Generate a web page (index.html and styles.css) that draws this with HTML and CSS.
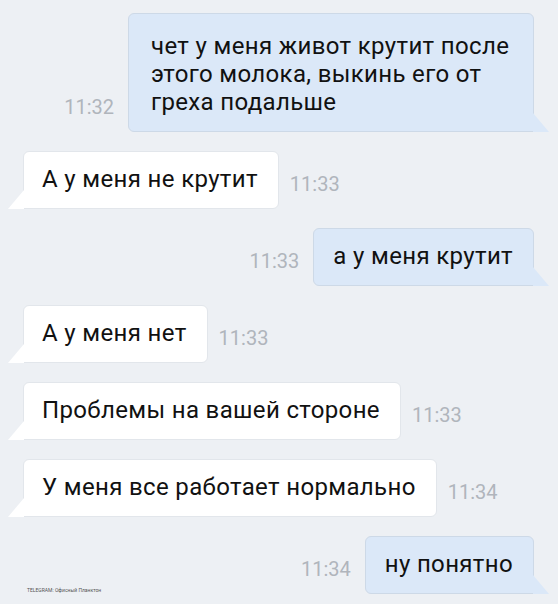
FILE: index.html
```html
<!DOCTYPE html>
<html lang="ru">
<head>
    <meta charset="UTF-8">
    <meta name="viewport" content="width=device-width, initial-scale=1.0">
    <title>Чат</title>
    <link rel="stylesheet" href="styles.css">
</head>
<body>

<div class="chat">
    <div class="row out">
        <span class="time">11:32</span>
        <div class="bubble wide">чет у меня живот крутит после этого молока, выкинь его от греха подальше</div>
    </div>
    <div class="row in">
        <div class="bubble">А у меня не крутит</div>
        <span class="time">11:33</span>
    </div>
    <div class="row out">
        <span class="time">11:33</span>
        <div class="bubble">а у меня крутит</div>
    </div>
    <div class="row in">
        <div class="bubble">А у меня нет</div>
        <span class="time">11:33</span>
    </div>
    <div class="row in">
        <div class="bubble">Проблемы на вашей стороне</div>
        <span class="time">11:33</span>
    </div>
    <div class="row in">
        <div class="bubble">У меня все работает нормально</div>
        <span class="time">11:34</span>
    </div>
    <div class="row out">
        <span class="time">11:34</span>
        <div class="bubble">ну понятно</div>
    </div>
    <div class="watermark">TELEGRAM: Офисный Планктон</div>
</div>

</body>
</html>
```

FILE: styles.css
```css
body {
    margin: 0;
    background-color: #edf0f4;
    font-family: Roboto, "Liberation Sans", sans-serif;
}
.chat {
    position: relative;
    width: 558px;
    height: 604px;
    box-sizing: border-box;
    padding: 13px 24px 0 23px;
    display: flex;
    flex-direction: column;
    gap: 19px;
}
.row {
    display: flex;
    align-items: flex-end;
}
.row.out {
    justify-content: flex-end;
}
.bubble {
    position: relative;
    box-sizing: border-box;
    height: 58px;
    padding: 13px 20px 0 18px;
    font-size: 24px;
    letter-spacing: 0.35px;
    line-height: 28px;
    color: #111;
    border-radius: 6px;
    white-space: nowrap;
}
.in .bubble {
    background-color: #ffffff;
    border: 1px solid #e2e6eb;
    border-bottom-left-radius: 0;
}
.out .bubble {
    background-color: #dbe8f8;
    border: 1px solid #cdd9e7;
    border-bottom-right-radius: 0;
    padding-left: 19px;
}
.bubble.wide {
    width: 406px;
    height: 119px;
    padding: 18px 20px 0 22px;
    white-space: normal;
}
.in .bubble::before,
.out .bubble::after {
    content: "";
    position: absolute;
    bottom: -1px;
    width: 16px;
    height: 19px;
}
.in .bubble::before {
    left: -16px;
    background-color: #ffffff;
    clip-path: polygon(100% 0, 100% 100%, 0 100%);
}
.out .bubble::after {
    right: -16px;
    background-color: #dbe8f8;
    clip-path: polygon(0 0, 100% 100%, 0 100%);
}
.time {
    font-size: 20px;
    color: #b0b5bc;
    margin-bottom: 13px;
}
.in .time {
    margin-left: 11px;
}
.out .time {
    margin-right: 14px;
}
.watermark {
    position: absolute;
    left: 27px;
    bottom: 11px;
    font-size: 5px;
    color: #555;
}
```
